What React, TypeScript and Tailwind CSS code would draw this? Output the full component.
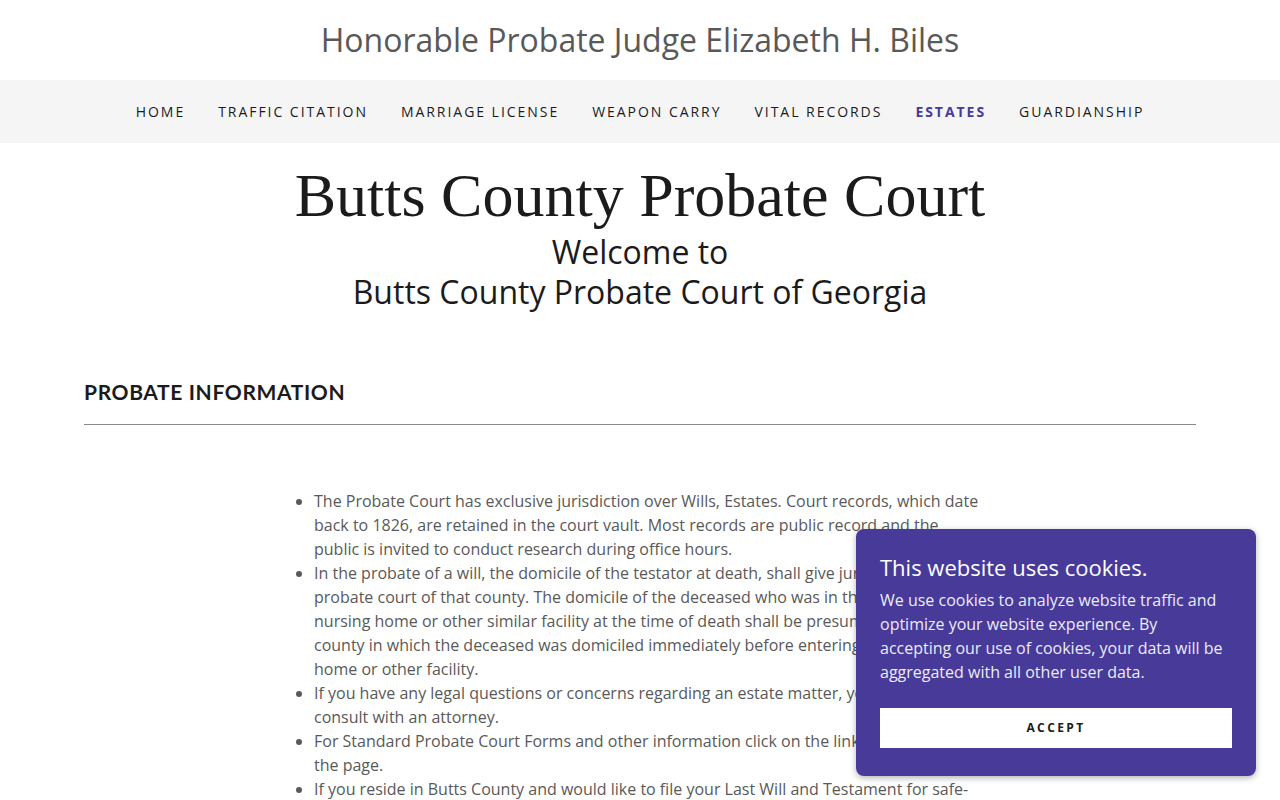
export default function App() {
  const nav = ["HOME", "TRAFFIC CITATION", "MARRIAGE LICENSE", "WEAPON CARRY", "VITAL RECORDS", "ESTATES", "GUARDIANSHIP"];

  return (
    <div className="relative min-h-[800px] bg-white font-['Open_Sans',sans-serif]">
      <header className="flex h-[80px] items-center justify-center">
        <h1 className="text-[32px] text-[#595959]">Honorable Probate Judge Elizabeth H. Biles</h1>
      </header>

      <nav className="flex h-[63px] items-center justify-center gap-[33px] bg-[#f5f5f5]">
        {nav.map((item) =>
          item === "ESTATES" ? (
            <a key={item} className="text-[14px] font-bold tracking-[0.14em] text-[#473a99]">
              {item}
            </a>
          ) : (
            <a key={item} className="text-[14px] tracking-[0.14em] text-[#1b1b1b]">
              {item}
            </a>
          )
        )}
      </nav>

      <section className="flex flex-col items-center pt-[19px] text-[#1b1b1b]">
        <h2 className="font-['Liberation_Serif',serif] text-[62px] leading-[66px]">Butts County Probate Court</h2>
        <p className="mt-[4px] text-center text-[32px] leading-[40px]">
          Welcome to
          <br />
          Butts County Probate Court of Georgia
        </p>
      </section>

      <section className="mx-[84px] mt-[64px]">
        <h3 className="font-['Lato',sans-serif] text-[21px] font-bold tracking-[0.03em] text-[#1b1b1b]">PROBATE INFORMATION</h3>
        <hr className="mt-[16px] border-t border-[#8a8a8a]" />
      </section>

      <ul className="ml-[290px] mt-[64px] w-[695px] list-disc pl-[24px] text-[16px] leading-[24px] text-[#595959]">
        <li>The Probate Court has exclusive jurisdiction over Wills, Estates. Court records, which date back to 1826, are retained in the court vault. Most records are public record and the public is invited to conduct research during office hours.</li>
        <li>In the probate of a will, the domicile of the testator at death, shall give jurisdiction to the probate court of that county. The domicile of the deceased who was in the residence of a nursing home or other similar facility at the time of death shall be presumed to be the county in which the deceased was domiciled immediately before entering the nursing home or other facility.</li>
        <li>If you have any legal questions or concerns regarding an estate matter, you should consult with an attorney.</li>
        <li>For Standard Probate Court Forms and other information click on the link at bottom of the page.</li>
        <li>If you reside in Butts County and would like to file your Last Will and Testament for safe-keeping, please contact the court.</li>
      </ul>

      <div className="absolute left-[856px] top-[529px] w-[400px] rounded-[8px] bg-[#473a99] px-[24px] pb-[28px] pt-[22px] text-white shadow-[0_2px_6px_rgba(0,0,0,0.3)]">
        <p className="text-[22px] leading-[32px]">This website uses cookies.</p>
        <p className="mt-[5px] text-[16px] leading-[24px] text-[#ececf6]">
          We use cookies to analyze website traffic and optimize your website experience. By accepting our use of cookies, your data will be aggregated with all other user data.
        </p>
        <button className="mt-[24px] flex h-[40px] w-full items-center justify-center bg-white text-[12px] font-bold tracking-[0.2em] text-[#1b1b1b]">
          ACCEPT
        </button>
      </div>
    </div>
  );
}
